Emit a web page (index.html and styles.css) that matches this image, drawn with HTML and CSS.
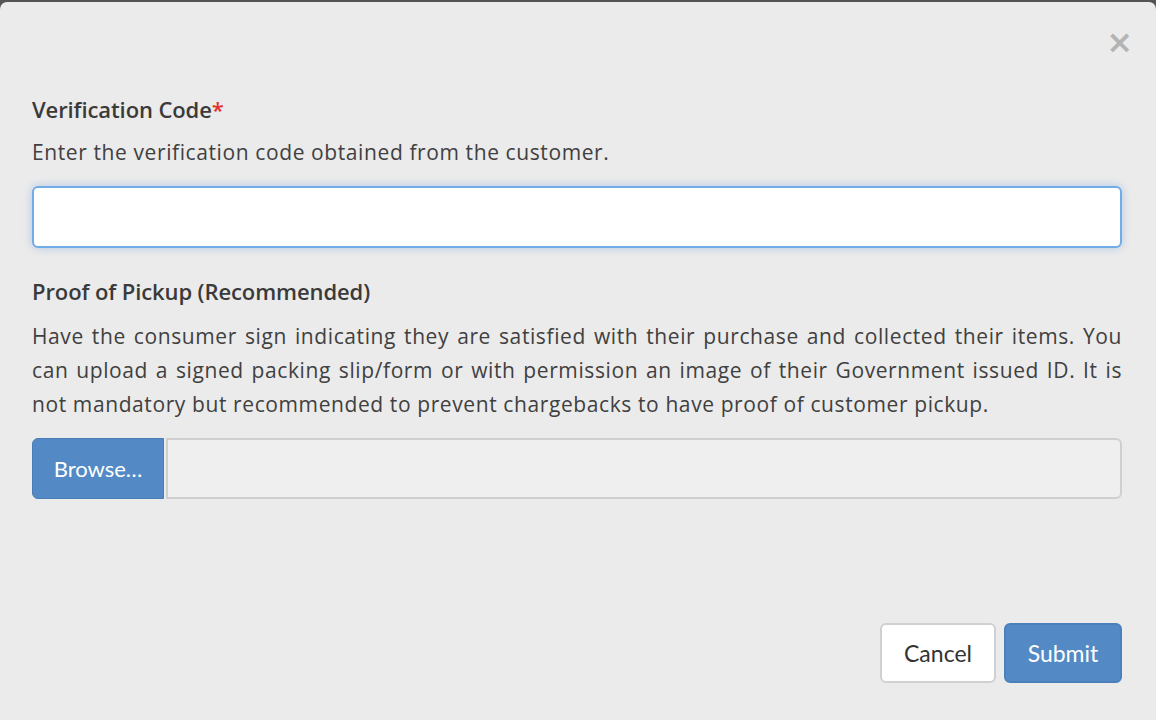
FILE: index.html
```html
<!DOCTYPE html>
<html>
<head>
<meta charset="utf-8">
<link rel="stylesheet" href="styles.css">
</head>
<body>
<div class="backdrop">
  <div class="modal">
    <div class="modal-header">
      <span class="close">&times;</span>
    </div>
    <div class="modal-body">
      <div class="field">
        <label class="label">Verification Code<span class="req">*</span></label>
        <p class="help">Enter the verification code obtained from the customer.</p>
        <input class="code-input" type="text">
      </div>
      <div class="field">
        <label class="label">Proof of Pickup (Recommended)</label>
        <p class="help justify">Have the consumer sign indicating they are satisfied with their purchase and collected their items. You can upload a signed packing slip/form or with permission an image of their Government issued ID. It is not mandatory but recommended to prevent chargebacks to have proof of customer pickup.</p>
        <div class="file-group">
          <span class="browse">Browse&hellip;</span>
          <span class="file-name"></span>
        </div>
      </div>
    </div>
    <div class="modal-footer">
      <button class="btn btn-default">Cancel</button>
      <button class="btn btn-primary">Submit</button>
    </div>
  </div>
</div>
</body>
</html>
```
FILE: styles.css
```css
* { box-sizing: border-box; }
html, body { margin: 0; padding: 0; }
body {
  background: #545454;
  font-family: "Open Sans", Lato, sans-serif;
  color: #333;
  width: 1156px;
  height: 720px;
  overflow: hidden;
}
.backdrop {
  padding-top: 2px;
}
.modal {
  background: #ebebeb;
  border-radius: 7px;
  height: 740px;
  display: flex;
  flex-direction: column;
}
.modal-header {
  height: 92px;
  display: flex;
  justify-content: flex-end;
  padding: 24px 23px 0 0;
}
.close {
  color: #b4b4b4;
  font-size: 32px;
  font-weight: 700;
  line-height: 32px;
  font-family: "DejaVu Sans", sans-serif;
}
.modal-body {
  padding: 0 34px 0 32px;
}
.field { display: flex; flex-direction: column; }
.label {
  font-size: 22px;
  line-height: 30px;
  font-weight: 600;
  letter-spacing: -0.1px;
  color: #3a3a3a;
}
.req { color: #e2332b; }
.help {
  margin: 11px 0 0 0;
  font-size: 21px;
  line-height: 34px;
  letter-spacing: 0.6px;
  color: #404040;
}
.justify { text-align: justify; margin-top: 13px; }
.code-input {
  margin-top: 17px;
  height: 62px;
  border: 2px solid #72ace6;
  border-radius: 6px;
  background: #fff;
  box-shadow: 0 0 8px rgba(102, 155, 220, 0.45);
  outline: none;
  margin-bottom: 28px;
}
.file-group {
  margin-top: 17px;
  display: flex;
  height: 61px;
}
.browse {
  width: 132px;
  background: #538ac5;
  border: 1px solid #4a7db5;
  border-radius: 6px 0 0 6px;
  color: #fff;
  font-family: Lato, "Open Sans", sans-serif;
  font-size: 22px;
  display: flex;
  align-items: center;
  justify-content: center;
}
.file-name {
  flex: 1;
  margin-left: 2px;
  background: #efefef;
  border: 2px solid #cfcfcf;
  border-radius: 0 6px 6px 0;
}
.modal-footer {
  margin-top: 124px;
  display: flex;
  justify-content: flex-end;
  gap: 8px;
  padding-right: 34px;
}
.btn {
  height: 60px;
  border-radius: 6px;
  font-family: Lato, "Open Sans", sans-serif;
  font-size: 23px;
  padding: 0;
}
.btn-default {
  width: 116px;
  background: #fff;
  border: 2px solid #d0d0d0;
  color: #333;
}
.btn-primary {
  width: 118px;
  background: #538ac5;
  border: 2px solid #4b80bb;
  color: #fff;
}
```
